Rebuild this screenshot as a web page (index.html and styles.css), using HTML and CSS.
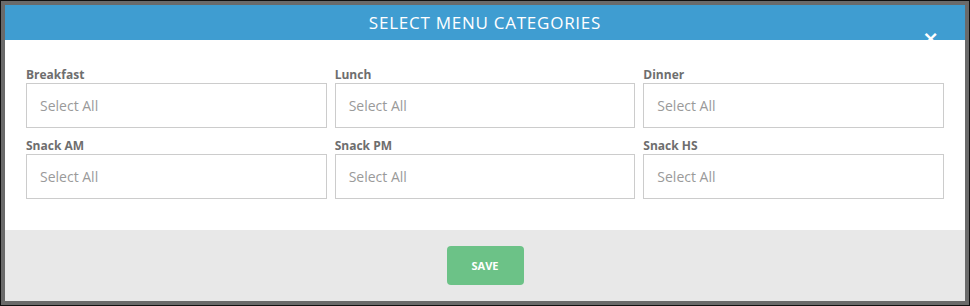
FILE: index.html
```html
<!DOCTYPE html>
<html>
<head>
<meta charset="utf-8">
<link rel="stylesheet" href="styles.css">
</head>
<body>
<div class="backdrop">
  <div class="modal">
    <div class="modal-header">
      <h1 class="modal-title">SELECT MENU CATEGORIES</h1>
      <span class="close">&times;</span>
    </div>
    <div class="modal-body">
      <div class="field">
        <label class="field-label">Breakfast</label>
        <div class="select-box">Select All</div>
      </div>
      <div class="field">
        <label class="field-label">Lunch</label>
        <div class="select-box">Select All</div>
      </div>
      <div class="field">
        <label class="field-label">Dinner</label>
        <div class="select-box">Select All</div>
      </div>
      <div class="field">
        <label class="field-label">Snack AM</label>
        <div class="select-box">Select All</div>
      </div>
      <div class="field">
        <label class="field-label">Snack PM</label>
        <div class="select-box">Select All</div>
      </div>
      <div class="field">
        <label class="field-label">Snack HS</label>
        <div class="select-box">Select All</div>
      </div>
    </div>
    <div class="modal-footer">
      <button class="save-btn">SAVE</button>
    </div>
  </div>
</div>
</body>
</html>
```
FILE: styles.css
```css
html, body {
  margin: 0;
  padding: 0;
}
body {
  width: 970px;
  height: 306px;
  overflow: hidden;
  font-family: "Open Sans", "Liberation Sans", sans-serif;
}
.backdrop {
  box-sizing: border-box;
  width: 970px;
  height: 306px;
  border: 1px solid #111;
  background: #6a6a6a;
  padding: 4px 4px 4px 4px;
}
.modal {
  width: 960px;
  height: 296px;
  background: #fff;
  display: flex;
  flex-direction: column;
  position: relative;
}
.modal-header {
  height: 35px;
  background: #3f9dd1;
  display: flex;
  align-items: center;
  justify-content: center;
}
.modal-title {
  margin: 0;
  color: #fff;
  font-family: "Open Sans", "Liberation Sans", sans-serif;
  font-weight: 400;
  font-size: 17px;
  letter-spacing: 0.75px;
  line-height: 20px;
  padding-top: 1px;
}
.close {
  position: absolute;
  right: 26px;
  top: 23px;
  color: #fff;
  font-family: "DejaVu Sans", sans-serif;
  font-weight: 700;
  font-size: 20px;
  line-height: 20px;
}
.modal-body {
  display: grid;
  grid-template-columns: repeat(3, 1fr);
  column-gap: 8px;
  row-gap: 10px;
  padding: 27px 21px 31px 21px;
}
.field {
  display: flex;
  flex-direction: column;
}
.field-label {
  font-size: 12px;
  font-weight: 700;
  color: #6e6e6e;
  line-height: 16px;
  height: 16px;
}
.select-box {
  box-sizing: border-box;
  height: 45px;
  border: 1px solid #cccccc;
  padding: 0 13px;
  display: flex;
  align-items: center;
  font-size: 14px;
  color: #9a9a9a;
}
.modal-footer {
  flex: 1;
  background: #e8e8e8;
  display: flex;
  justify-content: center;
  padding-top: 16px;
  align-items: flex-start;
}
.save-btn {
  width: 77px;
  height: 39px;
  border: none;
  border-radius: 4px;
  background: #6cc287;
  color: #fff;
  font-family: "Open Sans", "Liberation Sans", sans-serif;
  font-weight: 700;
  font-size: 11px;
  padding: 0;
}
```
